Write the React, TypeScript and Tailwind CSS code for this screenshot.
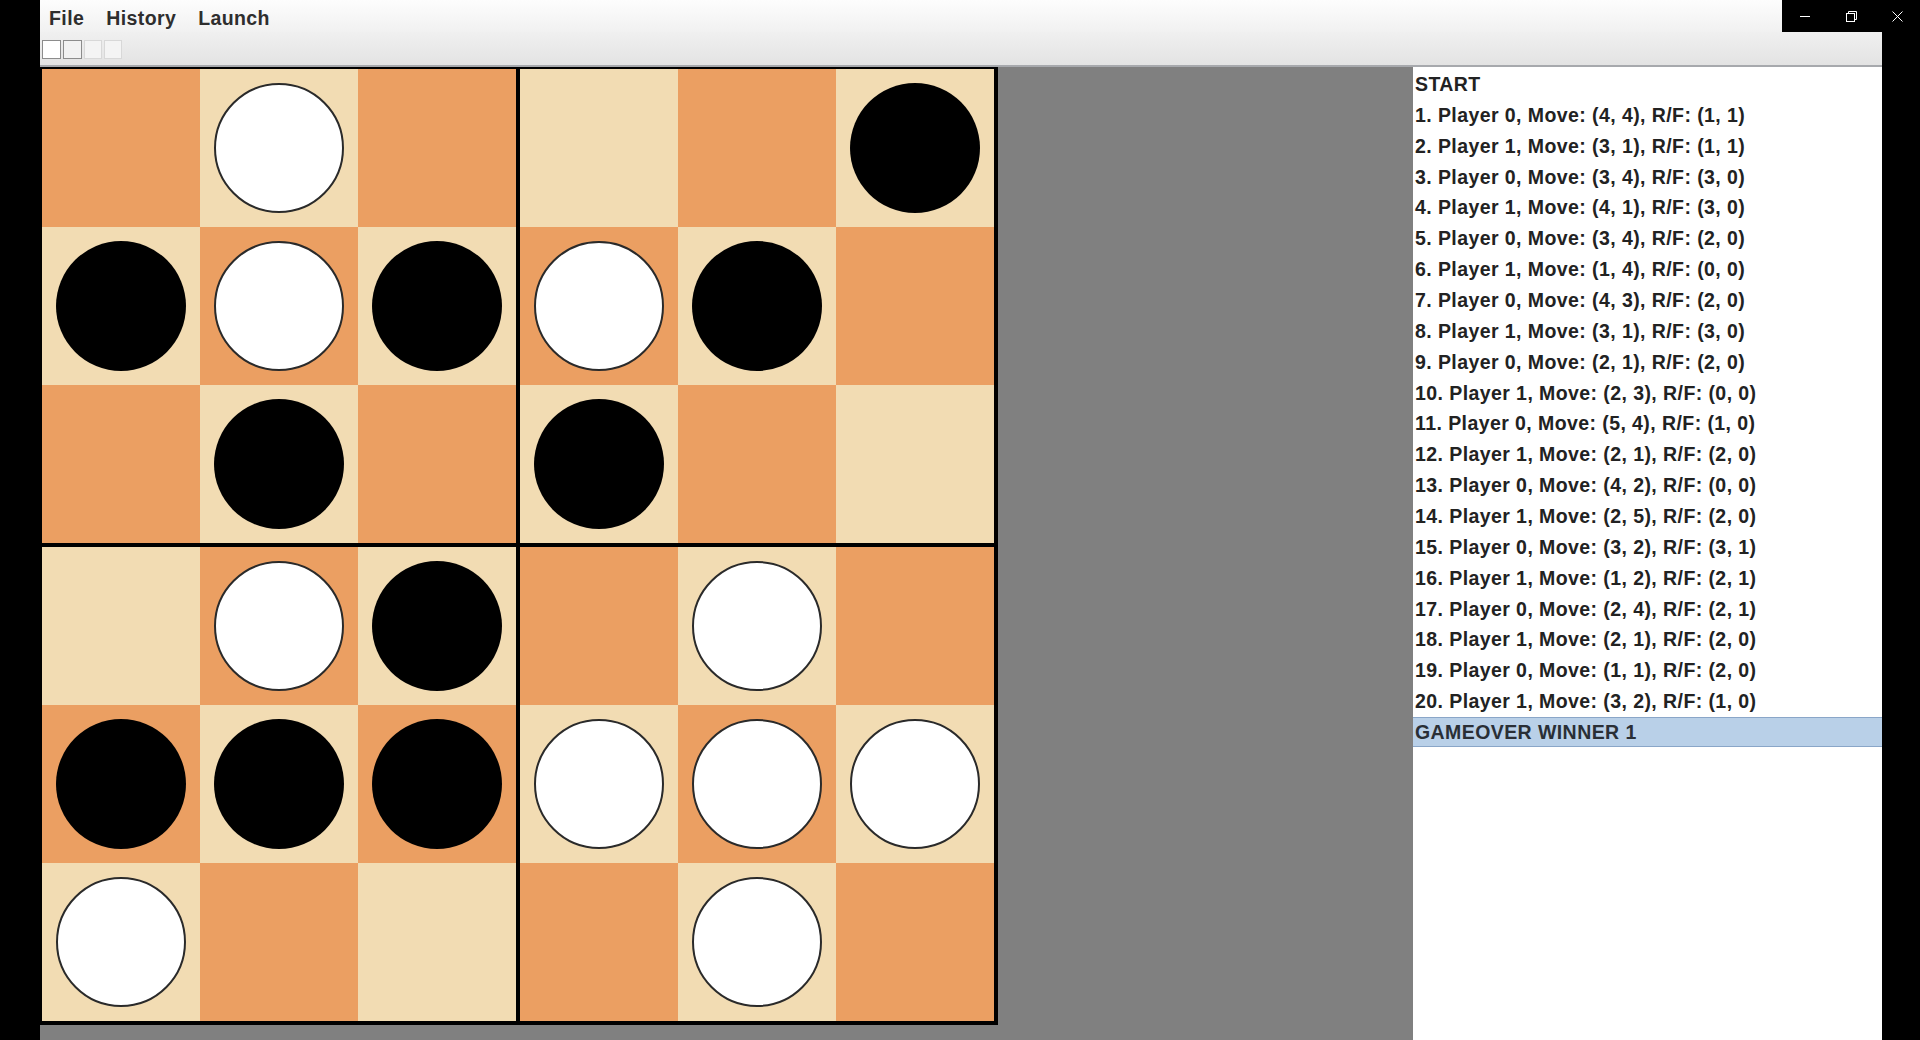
import React from "react";

// board layout: "w" white stone, "b" black stone, "." empty
const BOARD = [
  ".w...b",
  "bwbwb.",
  ".b.b..",
  ".wb.w.",
  "bbbwww",
  "w...w.",
];

const MOVES = [
  "1. Player 0, Move: (4, 4), R/F: (1, 1)",
  "2. Player 1, Move: (3, 1), R/F: (1, 1)",
  "3. Player 0, Move: (3, 4), R/F: (3, 0)",
  "4. Player 1, Move: (4, 1), R/F: (3, 0)",
  "5. Player 0, Move: (3, 4), R/F: (2, 0)",
  "6. Player 1, Move: (1, 4), R/F: (0, 0)",
  "7. Player 0, Move: (4, 3), R/F: (2, 0)",
  "8. Player 1, Move: (3, 1), R/F: (3, 0)",
  "9. Player 0, Move: (2, 1), R/F: (2, 0)",
  "10. Player 1, Move: (2, 3), R/F: (0, 0)",
  "11. Player 0, Move: (5, 4), R/F: (1, 0)",
  "12. Player 1, Move: (2, 1), R/F: (2, 0)",
  "13. Player 0, Move: (4, 2), R/F: (0, 0)",
  "14. Player 1, Move: (2, 5), R/F: (2, 0)",
  "15. Player 0, Move: (3, 2), R/F: (3, 1)",
  "16. Player 1, Move: (1, 2), R/F: (2, 1)",
  "17. Player 0, Move: (2, 4), R/F: (2, 1)",
  "18. Player 1, Move: (2, 1), R/F: (2, 0)",
  "19. Player 0, Move: (1, 1), R/F: (2, 0)",
  "20. Player 1, Move: (3, 2), R/F: (1, 0)",
];

const font = "font-['Liberation_Sans',Arial,sans-serif]";

function Cell({ r, c }: { r: number; c: number }) {
  const piece = BOARD[r][c];
  const light = (r + c) % 2 === 1;
  return (
    <div
      className={`w-[158px] h-[158px] flex items-center justify-center ${
        light ? "bg-[#f2dcb3]" : "bg-[#eb9f62]"
      }`}
    >
      {piece === "w" && (
        <div className="w-[130px] h-[130px] rounded-full bg-white border-2 border-[#2a2a2a]" />
      )}
      {piece === "b" && <div className="w-[130px] h-[130px] rounded-full bg-black" />}
    </div>
  );
}

function Quadrant({ qr, qc }: { qr: number; qc: number }) {
  const cells = [];
  for (let r = 0; r < 3; r++)
    for (let c = 0; c < 3; c++)
      cells.push(<Cell key={`${r}-${c}`} r={qr * 3 + r} c={qc * 3 + c} />);
  return <div className="grid grid-cols-3 border-2 border-black">{cells}</div>;
}

function WindowButtons() {
  return (
    <div className="w-[138px] h-[32px] bg-black flex items-center">
      <svg className="ml-[18px]" width="11" height="11" viewBox="0 0 11 11">
        <path d="M0 5.5h10" stroke="#fff" strokeWidth="1" />
      </svg>
      <svg className="ml-[35px]" width="11" height="11" viewBox="0 0 11 11">
        <path d="M2.5 2.5V0.5h8v8h-2" fill="none" stroke="#fff" strokeWidth="1" />
        <rect x="0.5" y="2.5" width="8" height="8" fill="none" stroke="#fff" strokeWidth="1" />
      </svg>
      <svg className="ml-[35px]" width="11" height="11" viewBox="0 0 11 11">
        <path d="M0.5 0.5l10 10M10.5 0.5l-10 10" stroke="#fff" strokeWidth="1" />
      </svg>
    </div>
  );
}

export default function App() {
  return (
    <div className={`w-[1920px] h-[1040px] bg-black flex flex-col overflow-hidden ${font}`}>
      {/* title/menu row */}
      <div className="flex h-[32px]">
        <div className="w-[40px]" />
        <div className="w-[1742px] bg-linear-to-b from-[#fdfdfd] to-[#f1f1f1] flex items-center pt-[6px] pl-[9px] gap-[22px] text-[19.5px] font-bold tracking-[0.4px] text-[#2e2e2e]">
          <span>File</span>
          <span>History</span>
          <span>Launch</span>
        </div>
        <WindowButtons />
      </div>

      <div className="flex flex-1">
        <div className="w-[40px]" />
        <div className="w-[1842px] flex flex-col">
          {/* toolbar */}
          <div className="h-[35px] bg-linear-to-b from-[#f0f0f0] to-[#e3e3e3] border-b-2 border-[#a7a9ad] flex items-start pt-[8px] pl-[2px] gap-[2px]">
            <div className="w-[19px] h-[19px] bg-white border border-[#8c8c8c]" />
            <div className="w-[19px] h-[19px] bg-[#f2f2f2] border border-[#8c8c8c]" />
            <div className="w-[18px] h-[19px] bg-[#f4f4f4] border border-[#d8d8d8]" />
            <div className="w-[18px] h-[19px] bg-[#f4f4f4] border border-[#d8d8d8]" />
          </div>

          <div className="flex flex-1">
            <div className="w-[1373px] bg-[#808080]">
              <div className="grid grid-cols-2 w-max border-r-2 border-b-2 border-black">
                <Quadrant qr={0} qc={0} />
                <Quadrant qr={0} qc={1} />
                <Quadrant qr={1} qc={0} />
                <Quadrant qr={1} qc={1} />
              </div>
            </div>

            <div className="w-[469px] bg-white pt-[2px] text-[19.5px] font-bold tracking-[0.42px] text-[#222] leading-[30.86px]">
              <div className="pl-[2px]">START</div>
              {MOVES.map((m) => (
                <div key={m} className="pl-[2px] whitespace-nowrap">
                  {m}
                </div>
              ))}
              <div className="pl-[2px] h-[30px] leading-[28px] bg-[#b9d0e8] border-y border-[#8aa6c8] text-[#2a2f36]">
                GAMEOVER WINNER 1
              </div>
            </div>
          </div>
        </div>
        <div className="flex-1" />
      </div>
    </div>
  );
}
